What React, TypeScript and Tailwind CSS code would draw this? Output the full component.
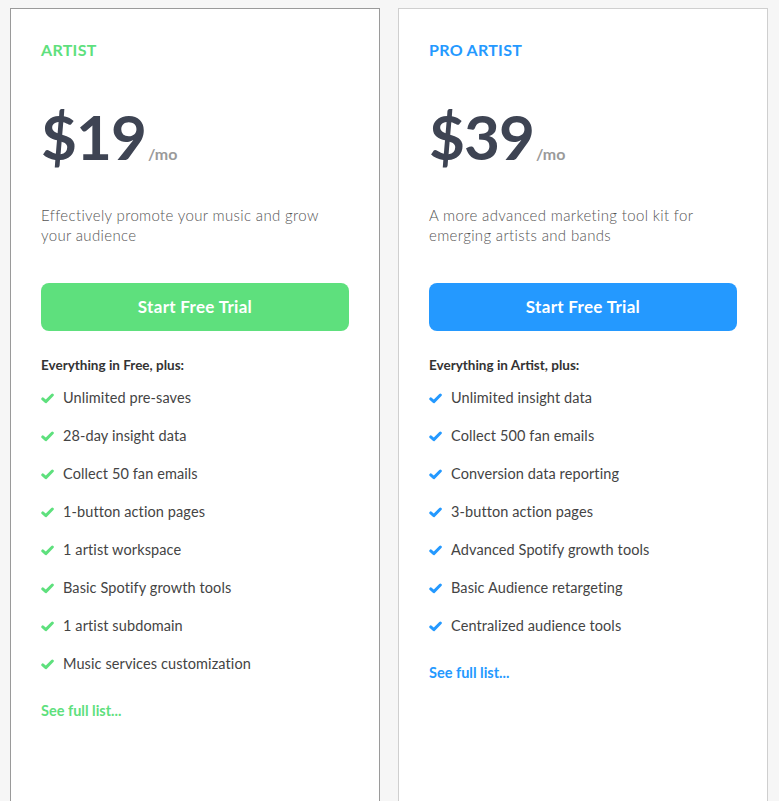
import { useState } from "react";

interface Plan {
  name: string;
  price: string;
  description: string;
  intro: string;
  features: string[];
  accent: string;
  border: string;
}

const plans: Plan[] = [
  {
    name: "ARTIST",
    price: "$19",
    description: "Effectively promote your music and grow your audience",
    intro: "Everything in Free, plus:",
    features: [
      "Unlimited pre-saves",
      "28-day insight data",
      "Collect 50 fan emails",
      "1-button action pages",
      "1 artist workspace",
      "Basic Spotify growth tools",
      "1 artist subdomain",
      "Music services customization",
    ],
    accent: "green",
    border: "dark",
  },
  {
    name: "PRO ARTIST",
    price: "$39",
    description: "A more advanced marketing tool kit for emerging artists and bands",
    intro: "Everything in Artist, plus:",
    features: [
      "Unlimited insight data",
      "Collect 500 fan emails",
      "Conversion data reporting",
      "3-button action pages",
      "Advanced Spotify growth tools",
      "Basic Audience retargeting",
      "Centralized audience tools",
    ],
    accent: "blue",
    border: "light",
  },
];

function Check({ className }: { className: string }) {
  return (
    <svg viewBox="0 0 14 12" className={className} fill="none">
      <path
        d="M1.8 6.4 L5.2 9.4 L12.3 2.2"
        stroke="currentColor"
        strokeWidth="3.2"
        strokeLinecap="round"
        strokeLinejoin="round"
      />
    </svg>
  );
}

function PlanCard({ plan }: { plan: Plan }) {
  const [hover, setHover] = useState(false);
  const green = plan.accent === "green";
  const text = green ? "text-[#5ee07d]" : "text-[#2499ff]";
  const bg = green ? "bg-[#5ee07d]" : "bg-[#2499ff]";

  return (
    <div
      className={
        "w-[370px] h-[820px] shrink-0 bg-white border px-[30px] pt-[31px] " +
        (plan.border === "dark" ? "border-[#9a9a9a]" : "border-[#cfcfcf]")
      }
    >
      <h3 className={"text-[16px] leading-5 font-bold tracking-[0.3px] " + text}>
        {plan.name}
      </h3>

      <div className="flex items-baseline mt-[45px]">
        <span className="text-[62px] leading-none font-bold text-[#3e4453] tracking-[-1px]">
          {plan.price}
        </span>
        <span className="text-[16px] font-bold text-[#9a9a9a] ml-[2px]">/mo</span>
      </div>

      <p className="mt-[38px] text-[15px] leading-5 font-light tracking-[0.35px] text-[#555] pr-4">
        {plan.description}
      </p>

      <button
        onMouseEnter={() => setHover(true)}
        onMouseLeave={() => setHover(false)}
        className={
          "mt-[38px] w-full h-12 rounded-lg text-white text-[17px] font-bold tracking-[0.3px] " +
          bg +
          (hover ? " opacity-90" : "")
        }
      >
        Start Free Trial
      </button>

      <p className="mt-6 text-[13.5px] leading-5 font-bold text-[#333]">{plan.intro}</p>

      <ul className="mt-[13px] flex flex-col gap-[18px]">
        {plan.features.map((f) => (
          <li key={f} className="flex items-center text-[14.5px] leading-5 tracking-[0.1px] text-[#444]">
            <Check className={"w-[13px] h-[11px] mr-[9px] " + text} />
            {f}
          </li>
        ))}
      </ul>

      <a href="#" className={"block mt-[27px] text-[14.5px] leading-5 font-bold " + text}>
        See full list...
      </a>
    </div>
  );
}

export default function App() {
  return (
    <div
      className="min-h-screen bg-[#f6f6f6] overflow-hidden"
      style={{ fontFamily: "Lato, 'Open Sans', sans-serif" }}
    >
      <div className="flex gap-[18px] pl-[10px] pt-2 h-[801px] overflow-hidden">
        {plans.map((p) => (
          <PlanCard key={p.name} plan={p} />
        ))}
      </div>
    </div>
  );
}
